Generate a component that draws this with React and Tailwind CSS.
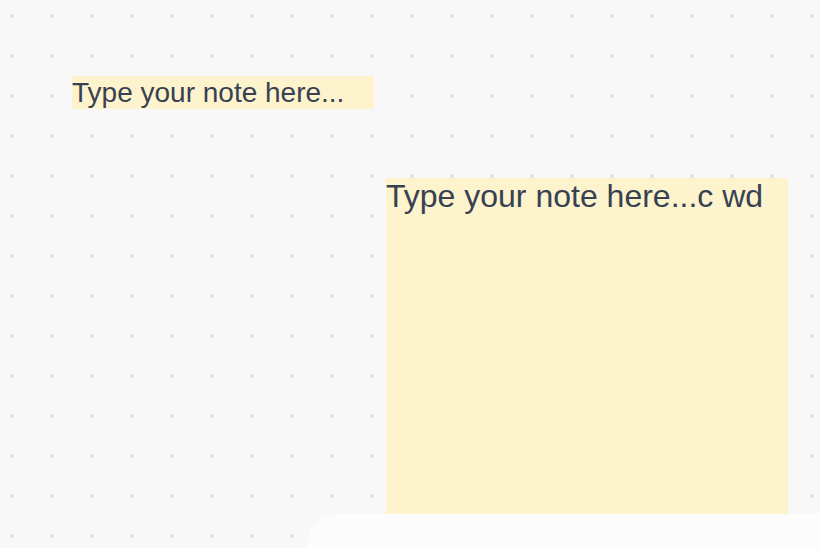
export default function App() {
  return (
    <div
      className="relative w-[820px] h-[548px] overflow-hidden bg-[#f8f8f8] bg-[radial-gradient(circle,#e2e2e2_1.6px,transparent_1.8px)] bg-[size:40px_40px] bg-[position:-8px_-4px]"
      style={{ fontFamily: '"Liberation Sans", Arial, sans-serif' }}
    >
      <div className="absolute left-[72px] top-[76px] w-[302px] h-[33px] bg-[#fdf3cd] text-[28px] leading-[33px] text-[#374151] whitespace-nowrap">
        Type your note here...
      </div>
      <div className="absolute left-[386px] top-[178px] w-[402px] h-[360px] bg-[#fdf3cd] text-[32px] leading-[37px] text-[#374151] whitespace-nowrap">
        Type your note here...c wd
      </div>
      <div className="absolute left-[307px] top-[514px] w-[560px] h-[80px] rounded-[30px] bg-[#fcfcfc]" />
    </div>
  );
}
